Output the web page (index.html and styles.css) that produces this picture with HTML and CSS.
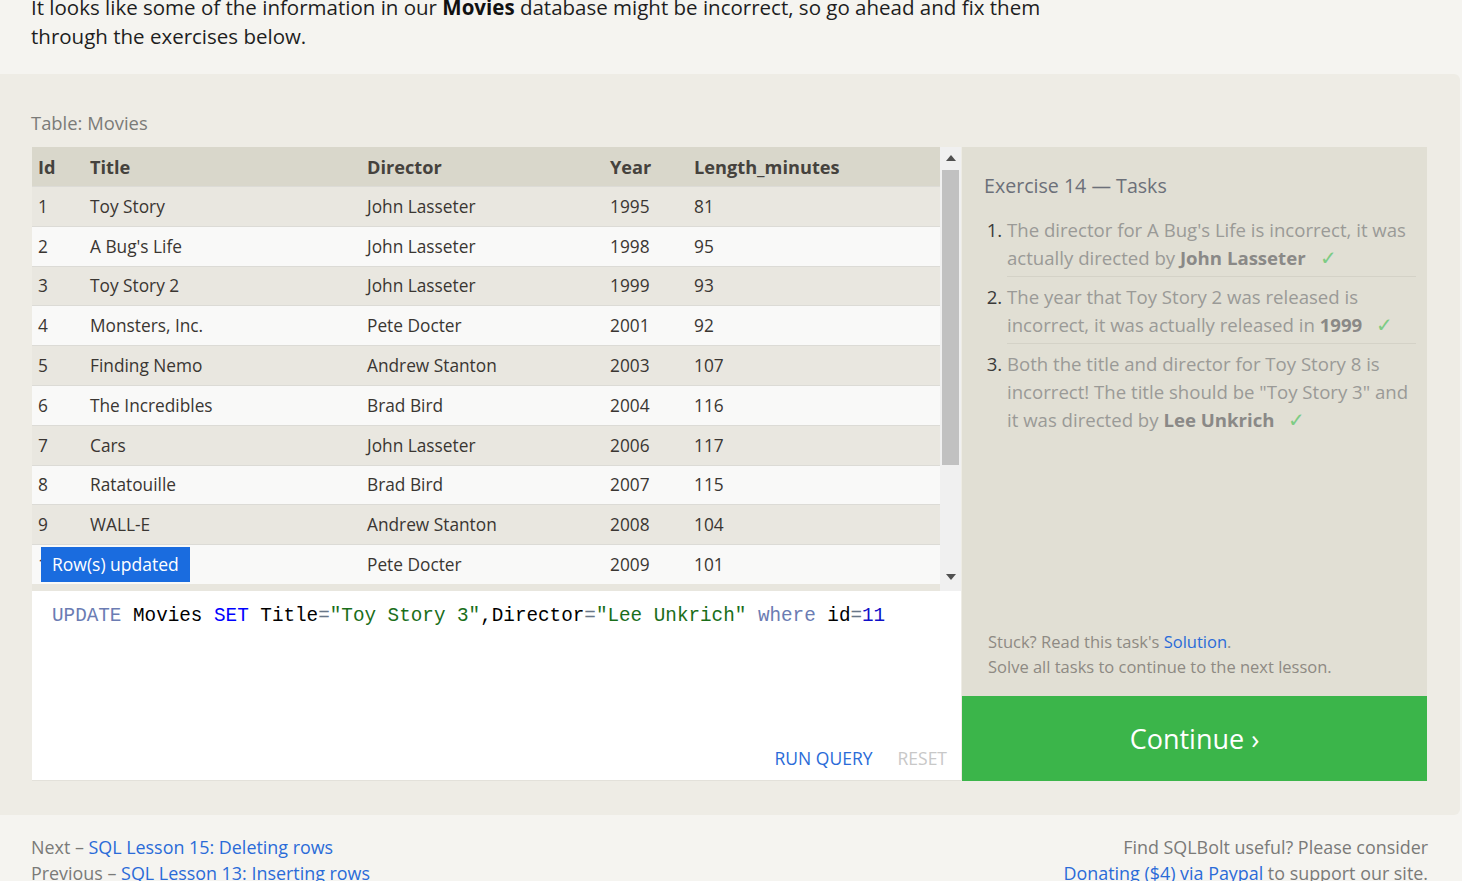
FILE: index.html
```html
<!DOCTYPE html>
<html lang="en">
<head>
<meta charset="utf-8">
<title>SQL Lesson 14: Updating rows</title>
<link rel="stylesheet" href="styles.css">
</head>
<body>
<div class="intro">
  <p>It looks like some of the information in our <strong>Movies</strong> database might be incorrect, so go ahead and fix them<br>through the exercises below.</p>
</div>

<section class="exercise">
  <div class="table-label">Table: Movies</div>
  <div class="workspace">
    <div class="left">
      <div class="results">
        <div class="table-wrap">
          <table class="movies">
            <thead>
              <tr><th class="c-id">Id</th><th class="c-title">Title</th><th class="c-dir">Director</th><th class="c-year">Year</th><th>Length_minutes</th></tr>
            </thead>
            <tbody>
              <tr><td>1</td><td>Toy Story</td><td>John Lasseter</td><td>1995</td><td>81</td></tr>
              <tr><td>2</td><td>A Bug's Life</td><td>John Lasseter</td><td>1998</td><td>95</td></tr>
              <tr><td>3</td><td>Toy Story 2</td><td>John Lasseter</td><td>1999</td><td>93</td></tr>
              <tr><td>4</td><td>Monsters, Inc.</td><td>Pete Docter</td><td>2001</td><td>92</td></tr>
              <tr><td>5</td><td>Finding Nemo</td><td>Andrew Stanton</td><td>2003</td><td>107</td></tr>
              <tr><td>6</td><td>The Incredibles</td><td>Brad Bird</td><td>2004</td><td>116</td></tr>
              <tr><td>7</td><td>Cars</td><td>John Lasseter</td><td>2006</td><td>117</td></tr>
              <tr><td>8</td><td>Ratatouille</td><td>Brad Bird</td><td>2007</td><td>115</td></tr>
              <tr><td>9</td><td>WALL-E</td><td>Andrew Stanton</td><td>2008</td><td>104</td></tr>
              <tr><td>10</td><td>Up</td><td>Pete Docter</td><td>2009</td><td>101</td></tr>
            </tbody>
          </table>
          <div class="toast">Row(s) updated</div>
        </div>
        <div class="scrollbar">
          <div class="sb-btn"><svg width="10" height="6" viewBox="0 0 10 6"><path d="M0 6 L5 0 L10 6 Z" fill="#505050"/></svg></div>
          <div class="sb-track"><div class="sb-thumb"></div></div>
          <div class="sb-btn sb-down"><svg width="10" height="6" viewBox="0 0 10 6"><path d="M0 0 L10 0 L5 6 Z" fill="#505050"/></svg></div>
        </div>
      </div>
      <div class="editor">
        <pre class="code"><span class="kw">UPDATE</span> Movies <span class="kw2">SET</span> Title<span class="op">=</span><span class="str">"Toy Story 3"</span>,Director<span class="op">=</span><span class="str">"Lee Unkrich"</span> <span class="kw">where</span> id<span class="op">=</span><span class="num">11</span></pre>
        <div class="actions">
          <a class="run" href="#">RUN QUERY</a>
          <span class="reset">RESET</span>
        </div>
      </div>
    </div>
    <div class="tasks">
      <div class="tasks-body">
        <h3 class="tasks-title">Exercise 14 — Tasks</h3>
        <ol class="task-list">
          <li>The director for A Bug's Life is incorrect, it was actually directed by <b>John Lasseter</b><span class="check">✓</span></li>
          <li>The year that Toy Story 2 was released is incorrect, it was actually released in <b>1999</b><span class="check">✓</span></li>
          <li>Both the title and director for Toy Story 8 is incorrect! The title should be "Toy Story 3" and it was directed by <b>Lee Unkrich</b><span class="check">✓</span></li>
        </ol>
        <div class="hint">
          <p>Stuck? Read this task's <a href="#">Solution</a>.</p>
          <p>Solve all tasks to continue to the next lesson.</p>
        </div>
      </div>
      <a class="continue" href="#">Continue ›</a>
    </div>
  </div>
</section>

<footer class="footer">
  <div class="nav">
    <p>Next – <a href="#">SQL Lesson 15: Deleting rows</a></p>
    <p>Previous – <a href="#">SQL Lesson 13: Inserting rows</a></p>
  </div>
  <div class="donate">
    <p>Find SQLBolt useful? Please consider</p>
    <p><a href="#">Donating ($4) via Paypal</a> to support our site.</p>
  </div>
</footer>
</body>
</html>
```

FILE: styles.css
```css
html, body {
  margin: 0;
  padding: 0;
}
body {
  background: #f5f4f0;
  font-family: "Open Sans", "Noto Sans", sans-serif;
  color: #222;
  overflow: hidden;
}
a { text-decoration: none; color: #2a6bd8; }

.intro {
  padding: 0 31px 23px;
  margin-top: -7px;
}
.intro p {
  margin: 0;
  font-size: 20.5px;
  line-height: 29px;
  color: #1e1e1e;
}
.intro strong { font-weight: 700; color: #111; }

.exercise {
  background: #eeece5;
  width: 1460px;
  border-radius: 0 6px 6px 0;
  padding: 36px 33px 34px 32px;
  box-sizing: border-box;
}
.table-label {
  font-size: 18.4px;
  color: #7b7b78;
  line-height: 26px;
  margin-left: -1px;
  margin-bottom: 11px;
}
.workspace {
  display: flex;
  gap: 1px;
}
.left {
  width: 929px;
  display: flex;
  flex-direction: column;
}
.results {
  display: flex;
  height: 444px;
  background: #e8e6de;
}
.table-wrap {
  position: relative;
  width: 908px;
}
.movies {
  width: 100%;
  border-collapse: collapse;
  font-size: 17.3px;
  color: #3a3632;
}
.movies th {
  background: #d9d7cb;
  text-align: left;
  font-weight: 700;
  font-size: 18.2px;
  color: #45423d;
  height: 39px;
  padding: 0 6px;
}
.movies td {
  height: 38.8px;
  padding: 0 6px;
  border-top: 1px solid #dcdbd6;
}
.movies tbody tr:nth-child(odd) td { background: #e9e7e0; }
.movies tbody tr:nth-child(even) td { background: #f9f9f8; }
.movies .c-id { width: 40px; }
.movies .c-title { width: 265px; }
.movies .c-dir { width: 231px; }
.movies .c-year { width: 72px; }

.toast {
  position: absolute;
  left: 9px;
  top: 400px;
  background: #1a6cdf;
  color: #fff;
  font-size: 17.5px;
  line-height: 35px;
  padding: 0 11px;
}

.scrollbar {
  width: 21px;
  background: #f0f0f0;
  display: flex;
  flex-direction: column;
}
.sb-btn {
  height: 21px;
  display: flex;
  align-items: center;
  justify-content: center;
}
.sb-down { padding-bottom: 4px; }
.sb-track {
  flex: 1;
  padding: 2px 2px 0;
}
.sb-thumb {
  height: 295px;
  background: #c1c1c1;
}

.editor {
  background: #fff;
  height: 190px;
  display: flex;
  flex-direction: column;
  justify-content: space-between;
  border-bottom: 1px solid #e3e1da;
  box-sizing: border-box;
}
.code {
  margin: 0;
  padding: 12px 20px 10px;
  font-family: "Liberation Mono", "DejaVu Sans Mono", monospace;
  font-size: 19.3px;
  line-height: 26px;
  color: #000;
}
.code .kw { color: #6b7cb3; }
.code .kw2 { color: #0000ff; }
.code .op { color: #687687; }
.code .str { color: #1a6e1a; }
.code .num { color: #1010c8; }
.actions {
  display: flex;
  justify-content: flex-end;
  gap: 25px;
  padding: 0 14px 10px;
  font-size: 17.5px;
  line-height: 24px;
}
.actions .run { color: #2a6bd8; }
.actions .reset { color: #c8c8c8; }

.tasks {
  width: 465px;
  background: #e1dfd4;
  display: flex;
  flex-direction: column;
}
.tasks-body {
  flex: 1;
  padding: 24px 11px 17px 22px;
  display: flex;
  flex-direction: column;
}
.tasks-title {
  margin: 0 0 14px;
  font-size: 19.6px;
  font-weight: 400;
  color: #6c7079;
  line-height: 30px;
}
.task-list {
  margin: 0;
  padding: 0 0 0 23px;
  font-size: 18.6px;
  line-height: 28px;
  color: #9a9a97;
}
.task-list li {
  padding: 1px 0 4px;
  border-bottom: 1px solid #d4d2c7;
  margin-bottom: 5px;
}
.task-list li:last-child { border-bottom: none; }
.task-list li::marker { color: #3a3a3a; }
.task-list b { color: #8a8987; font-weight: 700; }
.check {
  color: #7dcc84;
  margin-left: 14px;
  font-family: "DejaVu Sans", sans-serif;
  font-size: 20px;
  font-weight: 300;
}
.hint {
  margin-top: auto;
  padding-left: 4px;
  font-size: 16.5px;
  line-height: 25px;
  color: #8e8a83;
}
.hint p { margin: 0; }

.continue {
  background: #3bb54a;
  color: #fff;
  height: 85px;
  display: flex;
  align-items: center;
  justify-content: center;
  font-size: 27px;
}

.footer {
  display: flex;
  justify-content: space-between;
  padding: 19px 34px 0 31px;
  font-size: 17.9px;
  line-height: 26px;
  color: #7a7a78;
}
.footer p { margin: 0; }
.donate { text-align: right; }
```
